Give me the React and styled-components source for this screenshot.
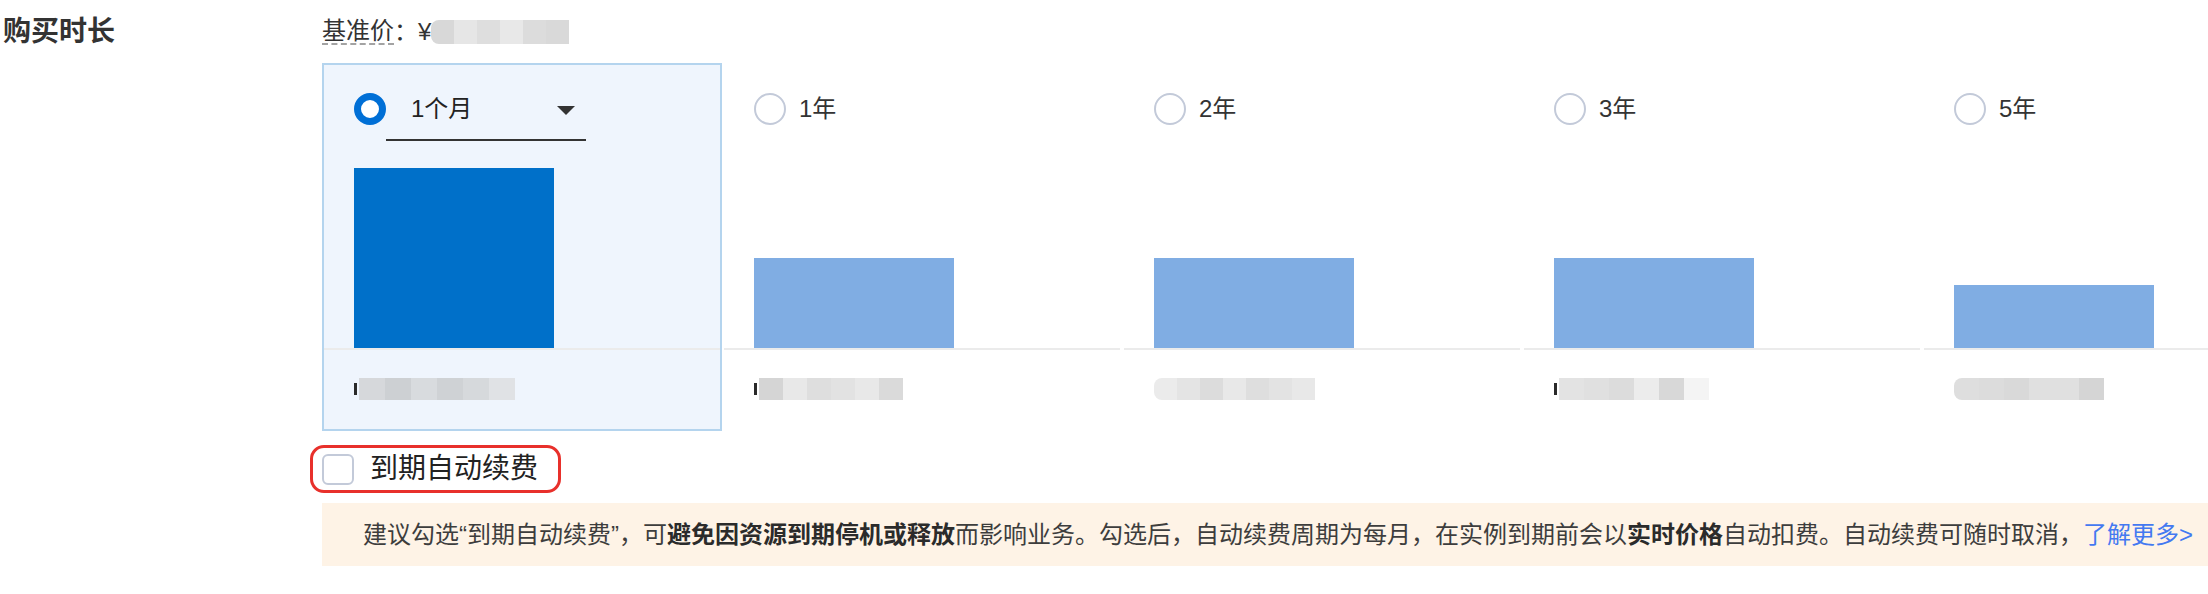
import React from 'react'
import styled, { createGlobalStyle } from 'styled-components'

const GlobalStyle = createGlobalStyle`
  body {
    margin: 0;
    background: #fff;
    font-family: "Liberation Sans", "Noto Sans CJK SC", sans-serif;
    color: #333;
  }
`

const Page = styled.div`
  display: flex;
  box-sizing: border-box;
  width: 2208px;
  height: 594px;
  padding: 16px 0 0 3px;
  overflow: hidden;
`

const FieldLabel = styled.div`
  width: 319px;
  flex-shrink: 0;
  font-size: 28px;
  font-weight: bold;
  line-height: 32px;
  color: #333;
`

const Content = styled.div`
  width: 1886px;
  flex-shrink: 0;
  display: flex;
  flex-direction: column;
`

const BaseLine = styled.div`
  display: flex;
  align-items: center;
  height: 32px;
  font-size: 24px;
  line-height: 32px;
  color: #333;
`

const BaseLabel = styled.span`
  display: inline-block;
  line-height: 24px;
  border-bottom: 2px dashed #a3a3a3;
`

const MosaicRow = styled.div`
  display: flex;
  align-items: center;
`

const Cell = styled.span`
  display: block;
  width: ${(p) => p.w}px;
  height: ${(p) => p.h}px;
  background: ${(p) => p.c};
  &:first-of-type {
    border-radius: 8px 0 0 8px;
  }
`

const YenMark = styled.span`
  display: block;
  width: 3px;
  height: 12px;
  margin-right: 2px;
  background: #2a2a2a;
`

const Columns = styled.div`
  display: flex;
  margin-top: 15px;
`

const Column = styled.div`
  box-sizing: border-box;
  width: 400px;
  height: 368px;
  flex-shrink: 0;
  border: 2px solid ${(p) => (p.active ? '#b4d4ee' : 'transparent')};
  background: ${(p) => (p.active ? '#eff5fd' : '#fff')};
  padding-top: 28px;
  display: flex;
  flex-direction: column;
`

const OptionHead = styled.div`
  display: flex;
  align-items: flex-start;
  height: 48px;
  padding-left: 30px;
`

const Radio = styled.span`
  box-sizing: border-box;
  display: block;
  width: 32px;
  height: 32px;
  border-radius: 50%;
  flex-shrink: 0;
  background: #fff;
  border: ${(p) => (p.checked ? '7px solid #006fd6' : '2px solid #c3cad9')};
`

const OptionText = styled.span`
  margin-left: 13px;
  font-size: 24px;
  line-height: 32px;
  color: #333;
`

const Select = styled.div`
  box-sizing: border-box;
  width: 200px;
  height: 48px;
  padding: 0 11px 0 25px;
  border-bottom: 2px solid #333;
  display: flex;
  align-items: flex-start;
  justify-content: space-between;
  font-size: 24px;
  line-height: 32px;
  color: #222;
`

const Caret = styled.span`
  display: block;
  margin-top: 13px;
  width: 0;
  height: 0;
  border-left: 9px solid transparent;
  border-right: 9px solid transparent;
  border-top: 9px solid #333;
`

const Chart = styled.div`
  height: 207px;
  display: flex;
  align-items: flex-end;
  padding-left: 30px;
`

const Bar = styled.div`
  width: 200px;
  background: ${(p) => (p.active ? '#0070c9' : '#80ade3')};
`

const Divider = styled.div`
  height: 2px;
  background: #ebebeb;
`

const PriceRow = styled.div`
  padding: 28px 0 0 30px;
`

const RenewBox = styled.label`
  align-self: flex-start;
  box-sizing: border-box;
  display: inline-flex;
  align-items: center;
  height: 48px;
  margin: 14px 0 0 -12px;
  padding: 0 20px 0 9px;
  border: 3px solid #e8302b;
  border-radius: 14px;
`

const Checkbox = styled.span`
  box-sizing: border-box;
  display: block;
  width: 32px;
  height: 31px;
  border: 2px solid #c3cad9;
  border-radius: 6px;
  background: #fff;
`

const RenewText = styled.span`
  margin-left: 16px;
  font-size: 28px;
  line-height: 32px;
  color: #222;
`

const Notice = styled.div`
  box-sizing: border-box;
  margin-top: 10px;
  height: 63px;
  padding-left: 41px;
  display: flex;
  align-items: center;
  background: #fef3e6;
  font-size: 24px;
  line-height: 32px;
  color: #3d3d3d;
  white-space: nowrap;
`

const Strong = styled.b`
  font-weight: bold;
  color: #2b2b2b;
`

const MoreLink = styled.a`
  color: #4479f1;
  text-decoration: none;
`

const Mosaic = ({ cells, w = 24, h = 22, yen }) => (
  <MosaicRow>
    {yen && <YenMark />}
    {cells.map((c, i) => (
      <Cell key={i} c={c} w={w} h={h} />
    ))}
  </MosaicRow>
)

const options = [
  { label: '1个月', bar: 180, active: true, yen: true, cells: ['#d6d8db', '#cdd0d3', '#d8dbde', '#cfd2d5', '#d6d9dc', '#e0e2e5'], w: 26 },
  { label: '1年', bar: 90, yen: true, cells: ['#d5d5d5', '#e8e8e8', '#dedede', '#e2e2e2', '#e8e8e8', '#dadada'], w: 24 },
  { label: '2年', bar: 90, cells: ['#ebebeb', '#e4e4e4', '#dcdcdc', '#e8e8e8', '#dedede', '#e3e3e3', '#e8e8e8'], w: 23 },
  { label: '3年', bar: 90, yen: true, cells: ['#e3e3e3', '#e0e0e0', '#dcdcdc', '#ececec', '#d8d8d8', '#f4f4f4'], w: 25 },
  { label: '5年', bar: 63, cells: ['#dedede', '#dcdcdc', '#d9d9d9', '#e0e0e0', '#e0e0e0', '#d5d5d5'], w: 25 },
]

const App = () => {
  return (
    <Page>
      <GlobalStyle />
      <FieldLabel>购买时长</FieldLabel>
      <Content>
        <BaseLine>
          <BaseLabel>基准价</BaseLabel>：¥
          <Mosaic cells={['#d8d8d8', '#e6e6e6', '#dedede', '#e8e8e8', '#dcdcdc', '#d9d9d9']} w={23} h={24} />
        </BaseLine>
        <Columns>
          {options.map((o) => (
            <Column key={o.label} active={o.active}>
              <OptionHead>
                <Radio checked={o.active} />
                {o.active ? (
                  <Select>
                    <span>{o.label}</span>
                    <Caret />
                  </Select>
                ) : (
                  <OptionText>{o.label}</OptionText>
                )}
              </OptionHead>
              <Chart>
                <Bar active={o.active} style={{ height: o.bar }} />
              </Chart>
              <Divider />
              <PriceRow>
                <Mosaic cells={o.cells} w={o.w} yen={o.yen} />
              </PriceRow>
            </Column>
          ))}
        </Columns>
        <RenewBox>
          <Checkbox />
          <RenewText>到期自动续费</RenewText>
        </RenewBox>
        <Notice>
          建议勾选“到期自动续费”，可<Strong>避免因资源到期停机或释放</Strong>而影响业务。勾选后，自动续费周期为每月，在实例到期前会以<Strong>实时价格</Strong>自动扣费。自动续费可随时取消，
          <MoreLink href="#">了解更多&gt;</MoreLink>
        </Notice>
      </Content>
    </Page>
  )
}

export default App
